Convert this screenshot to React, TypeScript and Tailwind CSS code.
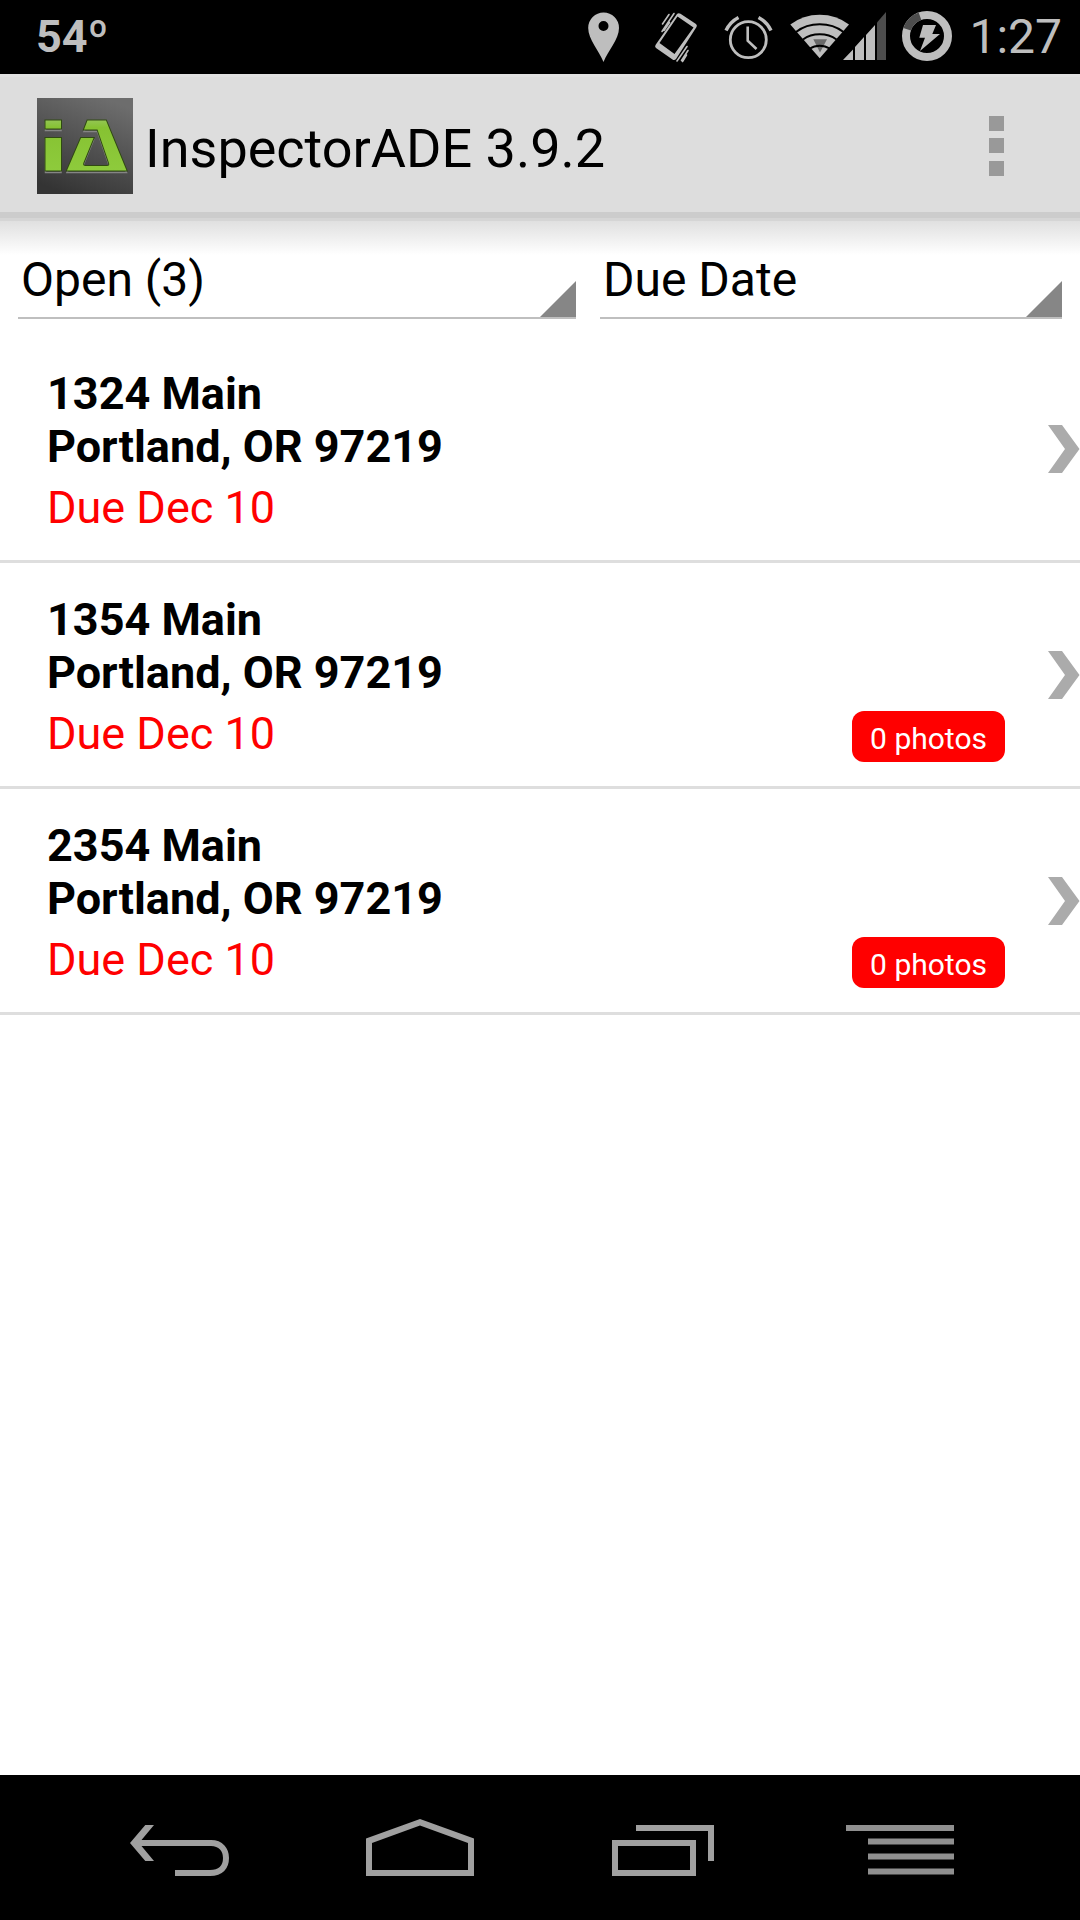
import type { ReactNode } from "react";

type Order = {
  street: string;
  city: string;
  due: string;
  photos?: string;
};

const orders: Order[] = [
  { street: "1324 Main", city: "Portland, OR 97219", due: "Due Dec 10" },
  { street: "1354 Main", city: "Portland, OR 97219", due: "Due Dec 10", photos: "0 photos" },
  { street: "2354 Main", city: "Portland, OR 97219", due: "Due Dec 10", photos: "0 photos" },
];

function StatusIcons() {
  return (
    <div className="flex items-center text-[#bebebe]">
      {/* location */}
      <svg width="72" height="74" viewBox="566 0 72 74" aria-hidden="true">
        <path
          fill="currentColor"
          fillRule="evenodd"
          d="M602.5 62C598 51 587.2 39 587.2 28a15.4 15.4 0 0 1 30.8 0C618 39 607 51 602.5 62ZM602.5 21a5 5 0 1 0 0 10a5 5 0 0 0 0-10Z"
        />
      </svg>
      {/* vibrate */}
      <svg width="72" height="74" viewBox="638 0 72 74" aria-hidden="true">
        <path
          fill="currentColor"
          fillRule="evenodd"
          d="M676 14q1.500-1.500 3.500-.3L695 24q1.500 1.300.5 3L675 59q-1.500 1.800-3.500.5L655 48q-1.500-1.200-.5-3ZM676.500 16.500L658.500 43L673.500 54L692.500 27.500Z"
        />
        <path
          stroke="currentColor"
          strokeWidth="1.600"
          strokeLinecap="round"
          d="M668 14.500L661.500 24M673 13.500L661 31.500M673.500 52.500M686 46.500L676 61M687 50.500L680.500 60.500M685.500 55L681.500 61.500M668.500 22.500L663 30.500"
        />
      </svg>
      {/* alarm */}
      <svg width="72" height="74" viewBox="710 0 72 74" fill="none" stroke="currentColor" aria-hidden="true">
        <circle cx="747.300" cy="39.700" r="18" strokeWidth="2.800" />
        <path strokeWidth="2.600" d="M746.700 26.500V40.700L755.500 49" />
        <path strokeWidth="3.400" d="M725 30.500Q729 22 737.500 17.500M757.500 17.500Q766 22 770 30.500" />
      </svg>
      {/* wifi and signal */}
      <svg width="110" height="74" viewBox="782 0 110 74" aria-hidden="true">
        <path fill="currentColor" d="M818.700 58.300L789.300 24.500Q802 14.700 818.700 14.700T848 24.500Z" />
        <path fill="#6a6a6a" d="M812.300 39.300H826L819 52.500Z" />
        <path
          fill="none"
          stroke="#000"
          strokeWidth="2"
          d="M795 32Q805 24.300 818.700 24.300T842.500 32M802 39.500Q809 34.300 818.700 34.300T835.500 39.500M809 48.500Q813 45.700 818.700 45.700T828.500 48.500"
        />
        <path fill="currentColor" d="M842 60L852 49.500V60ZM854 60V47L863 37V60ZM865 60V35L874 25V60Z" />
        <path fill="#4d4d4d" d="M876 60V22.500L885 12V60Z" />
      </svg>
      {/* battery */}
      <svg width="76" height="74" viewBox="892 0 76 74" aria-hidden="true">
        <circle cx="926" cy="36" r="21" fill="none" stroke="currentColor" strokeWidth="8" />
        <path
          fill="none"
          stroke="#4d4d4d"
          strokeWidth="8"
          d="M906.100 29.300A21 21 0 0 1 919 16.200"
        />
        <path fill="currentColor" d="M922 25H935L931.300 34H939L919 51L924 37.700H918.300Z" />
      </svg>
    </div>
  );
}

function Logo() {
  return (
    <svg width="96" height="96" viewBox="0 0 96 96" role="img" aria-label="InspectorADE">
      <defs>
        <linearGradient id="tile" x1="0.300" y1="1" x2="0.700" y2="0">
          <stop offset="0" stopColor="#343434" />
          <stop offset="1" stopColor="#6d6d6d" />
        </linearGradient>
        <linearGradient id="leaf" x1="0" y1="22" x2="0" y2="73" gradientUnits="userSpaceOnUse">
          <stop offset="0" stopColor="#94c654" />
          <stop offset="0.150" stopColor="#86c232" />
          <stop offset="1" stopColor="#8ecb3c" />
        </linearGradient>
        <path
          id="mark"
          d="M8.500 22.500H24V30.500H8.500ZM8.500 40H24V72.500H8.500ZM50.500 22.500H69L89.500 72.500H30L44 40H56.500L46.300 65Q45.500 68 48.500 68H70Q73 68 72 65L60.500 31.500H47Z"
        />
      </defs>
      <rect width="96" height="96" fill="url(#tile)" />
      <use href="#mark" y="2" fill="none" stroke="#858585" strokeWidth="1.500" />
      <use href="#mark" fill="url(#leaf)" stroke="#304a12" strokeWidth="2" paintOrder="stroke" />
    </svg>
  );
}

function Spinner({ label, options }: { label: string; options: string[] }) {
  return (
    <div className="relative border-b-2 border-[#bfbfbf]">
      <select
        aria-label={label}
        className="block h-[74px] w-full appearance-none bg-transparent pl-[3px] text-[48px] text-black outline-none"
      >
        {options.map((option) => (
          <option key={option}>{option}</option>
        ))}
      </select>
      <svg
        className="pointer-events-none absolute right-0 bottom-0"
        width="36"
        height="36"
        viewBox="0 0 36 36"
        aria-hidden="true"
      >
        <path fill="#868686" d="M36 0V36H0Z" />
      </svg>
    </div>
  );
}

function OrderRow({ order }: { order: Order }) {
  return (
    <li className="border-b-3 border-[#dedede]">
      <a href="#order" className="flex">
        <div className="flex-1 pt-[30px] pb-[26px] pl-[47px] text-[45px] leading-[53px]">
          <p className="font-bold">{order.street}</p>
          <p className="font-bold">{order.city}</p>
          <p className="mt-2 text-[#ff0000]">{order.due}</p>
        </div>
        {order.photos && (
          <span className="mb-6 self-end rounded-xl bg-[#ff0000] px-[18px] pt-[10px] pb-[6px] text-[30px] leading-[35px] text-white">
            {order.photos}
          </span>
        )}
        <svg
          className="ml-[42px] self-center"
          width="33"
          height="48"
          viewBox="0 0 33 48"
          aria-hidden="true"
        >
          <path fill="#ababab" d="M1 0H15L32.500 24L15 48H1L18 24Z" />
        </svg>
      </a>
    </li>
  );
}

function NavButton({ label, children }: { label: string; children: ReactNode }) {
  return (
    <button type="button" aria-label={label} className="flex h-[145px] flex-1 items-center justify-center">
      <svg width="108" height="57" viewBox="0 0 108 57" fill="#a0a0a0" aria-hidden="true">
        {children}
      </svg>
    </button>
  );
}

export default function App() {
  return (
    <div className="flex min-h-screen flex-col bg-white font-['Roboto',sans-serif] text-black">
      <div className="flex h-[74px] items-center justify-between bg-black pr-[18px] pl-9 text-[#bebebe]">
        <span className="font-['Liberation_Sans_Narrow','Roboto',sans-serif] text-[45px] font-bold">54º</span>
        <div className="flex items-center">
          <StatusIcons />
          <span className="text-[48px]">1:27</span>
        </div>
      </div>

      <header className="flex h-[144px] items-center border-t-3 border-b-6 border-t-[#e1e1e1] border-b-[#cccccc] bg-[#dddddd] pt-[3px] pl-[37px]">
        <Logo />
        <h1 className="flex-1 pt-1 pl-3 text-[54px] leading-[63px]">InspectorADE 3.9.2</h1>
        <button type="button" aria-label="More options" className="flex h-24 w-[168px] items-center justify-center">
          <svg width="15" height="60" viewBox="0 0 15 60" fill="#999999" aria-hidden="true">
            <path d="M0 0H15V15H0ZM0 22H15V37H0ZM0 45H15V60H0Z" />
          </svg>
        </button>
      </header>

      <main className="flex-1 border-t-3 border-[#d5d5d5] bg-linear-to-b from-[#e0e0e0] to-white bg-[length:100%_34px] bg-no-repeat">
        <div className="grid grid-cols-[558fr_462fr] gap-6 px-[18px] pt-[22px] pb-[18px]">
          <Spinner label="Status" options={["Open (3)"]} />
          <Spinner label="Sort by" options={["Due Date"]} />
        </div>
        <ul>
          {orders.map((order) => (
            <OrderRow key={order.street} order={order} />
          ))}
        </ul>
      </main>

      <nav className="flex bg-black px-15">
        <NavButton label="Back">
          <path d="M4 24L19.300 6H28L13 24L28 42H19.300Z" />
          <path
            fill="none"
            stroke="#a0a0a0"
            strokeWidth="6"
            d="M11 24H85C95 24 100 31 100 39C100 48 95 54 84 54H49"
          />
        </NavButton>
        <NavButton label="Home">
          <path fillRule="evenodd" d="M0 19.500L54 0L108 19.500V57H0ZM6 24V51H102V24L54 6.500Z" />
        </NavButton>
        <NavButton label="Recent apps">
          <path fillRule="evenodd" d="M6 21H90V57H6ZM12 27V51H84V27ZM30 6H108V42H102V12H30Z" />
        </NavButton>
        <NavButton label="Menu">
          <path fill="#8f8f8f" d="M0 6H108V12H0ZM22 19.500H108V25.500H22ZM22 34.500H108V40.500H22ZM22 49.500H108V55.500H22Z" />
        </NavButton>
      </nav>
    </div>
  );
}
